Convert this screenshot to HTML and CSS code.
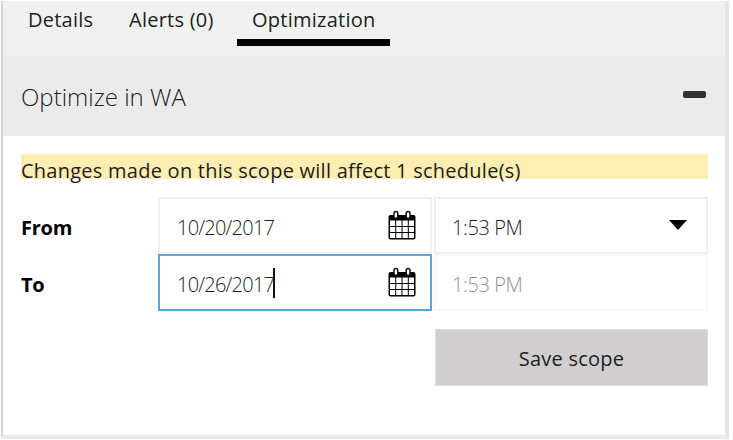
FILE: index.html
```
<!DOCTYPE html>
<html lang="en">
<head>
<meta charset="utf-8">
<title>Optimization</title>
<link rel="stylesheet" href="styles.css">
</head>
<body>
<main class="panel">
  <nav class="tabs">
    <a class="tab details"><span>Details</span></a>
    <a class="tab alerts"><span>Alerts (0)</span></a>
    <a class="tab active"><span>Optimization</span></a>
  </nav>
  <header class="section-head">
    <h1>Optimize in WA</h1>
    <span class="collapse"></span>
  </header>
  <section class="content">
    <p class="notice"><span>Changes made on this scope will affect 1 schedule(s)</span></p>
    <div class="row">
      <label>From</label>
      <div class="field date"><span class="value">10/20/2017</span>
        <svg class="calendar" viewBox="0 0 28 30"><rect x="0.500" y="5" width="27" height="24.500" rx="2"/><path class="cells" d="M2 10.500h5.200v5.500H2zM8.200 10.500h5.300v5.500H8.200zM14.500 10.500h5.300v5.500H14.500zM20.800 10.500h5.200v5.500h-5.200zM2 17h5.200v5H2zM8.200 17h5.300v5H8.200zM14.500 17h5.300v5H14.500zM20.800 17h5.200v5h-5.200zM2 23h5.200v5H2zM8.200 23h5.300v5H8.200zM14.500 23h5.300v5H14.500zM20.800 23h5.200v5h-5.200z"/><rect class="ring" x="6" y="1.500" width="3.800" height="7" rx="1.900"/><rect class="ring" x="18.200" y="1.500" width="3.800" height="7" rx="1.900"/></svg>
      </div>
      <div class="field time"><span class="value">1:53 PM</span><span class="arrow"></span></div>
    </div>
    <div class="row">
      <label>To</label>
      <div class="field date focused"><span class="value">10/26/2017</span><span class="caret"></span>
        <svg class="calendar" viewBox="0 0 28 30"><rect x="0.500" y="5" width="27" height="24.500" rx="2"/><path class="cells" d="M2 10.500h5.200v5.500H2zM8.200 10.500h5.300v5.500H8.200zM14.500 10.500h5.300v5.500H14.500zM20.800 10.500h5.200v5.500h-5.200zM2 17h5.200v5H2zM8.200 17h5.300v5H8.200zM14.500 17h5.300v5H14.500zM20.800 17h5.200v5h-5.200zM2 23h5.200v5H2zM8.200 23h5.300v5H8.200zM14.500 23h5.300v5H14.500zM20.800 23h5.200v5h-5.200z"/><rect class="ring" x="6" y="1.500" width="3.800" height="7" rx="1.900"/><rect class="ring" x="18.200" y="1.500" width="3.800" height="7" rx="1.900"/></svg>
      </div>
      <div class="field time disabled"><span class="value">1:53 PM</span></div>
    </div>
    <button class="save">Save scope</button>
  </section>
</main>
</body>
</html>
```
FILE: styles.css
```
* { box-sizing: border-box; }
body {
  margin: 0;
  background: #fff;
  color: #1d1d1d;
  font: 20px/26px "Open Sans", "Noto Sans", sans-serif;
  letter-spacing: 0.25px;
  overflow: hidden;
}
.panel {
  width: 728px;
  height: 438px;
  margin: 1px 0 0 1px;
  border-left: 2px solid #d3d3d3;
  border-right: 4px solid #e5e5e5;
  border-bottom: 4px solid #eaeaea;
}
.tabs {
  display: flex;
  height: 55px;
  padding-left: 25px;
  background: #f1f1f1;
}
.tab {
  height: 45px;
  padding-top: 6px;
  white-space: nowrap;
}
.details { width: 101px; }
.alerts { width: 108px; }
.active {
  width: 153px;
  padding-left: 15px;
  border-bottom: 7px solid #000;
}
.section-head {
  display: flex;
  justify-content: space-between;
  align-items: center;
  height: 80px;
  padding: 0 19px 0 18px;
  background: #ebebeb;
}
h1 {
  margin: 2px 0 0;
  font-size: 24px;
  font-weight: 300;
  line-height: 32px;
  letter-spacing: 0;
}
.collapse {
  width: 23px;
  height: 7px;
  margin-bottom: 3px;
  border-radius: 2px;
  background: #303030;
}
.content {
  display: flex;
  flex-direction: column;
  padding: 18px 17px 0 18px;
}
.notice {
  height: 25px;
  margin: 0 0 18px;
  padding-top: 4px;
  background: #feeeb2;
  white-space: nowrap;
}
.row {
  display: grid;
  grid-template-columns: 135px 274px 274px;
  column-gap: 2px;
  height: 57px;
}
.row label {
  padding-top: 18px;
  color: #000;
  font-weight: 700;
  letter-spacing: -0.25px;
}
.field {
  display: flex;
  align-items: center;
  padding: 3px 14px 0 17px;
  border: 2px solid #f0f0f0;
  font-weight: 300;
  letter-spacing: -0.78px;
  white-space: nowrap;
}
.value { padding-top: 2px; }
.time { padding-left: 16px; letter-spacing: -0.4px; }
.focused { border-color: #59a5dc; }
.disabled { border-color: #f7f7f7; color: #929292; }
.caret { width: 2px; height: 30px; background: #111; margin: 0 0 3px -1px; }
.calendar {
  width: 28px;
  height: 30px;
  margin: 0 0 5px auto;
}
.cells { fill: #fff; }
.ring { fill: #fff; stroke: #111; stroke-width: 1.5; }
.arrow {
  width: 18px;
  height: 10px;
  margin: 0 5px 4px auto;
  background: #000;
  clip-path: polygon(0 0, 100% 0, 50% 100%);
}
.save {
  align-self: flex-end;
  width: 273px;
  height: 57px;
  margin-top: 18px;
  padding: 3px 0 0;
  border: 1px solid #dedede;
  background: #d0cece;
  color: #1d1d1d;
  font: inherit;
  letter-spacing: inherit;
}
```
